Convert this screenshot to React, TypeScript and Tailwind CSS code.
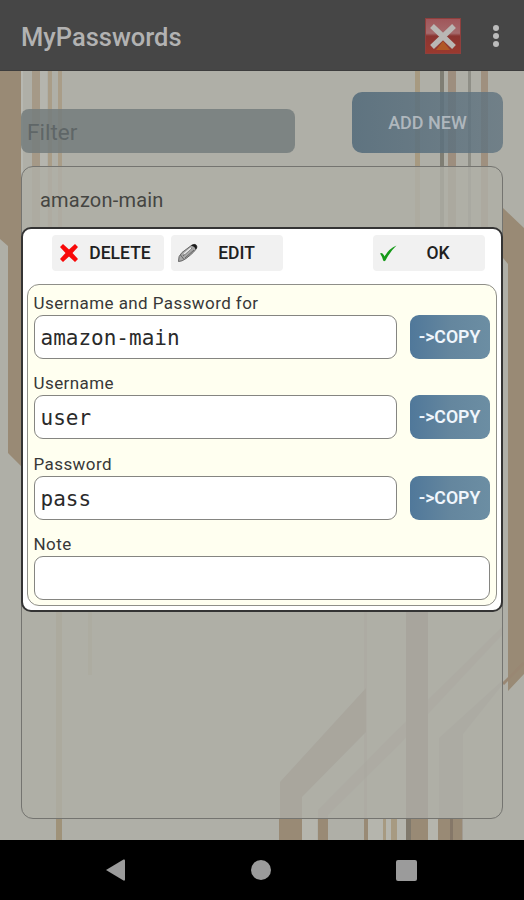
import type { ReactNode } from "react";

function Backdrop() {
  return (
    <svg className="absolute inset-0" width="524" height="769" viewBox="0 71 524 769" fill="#998a75">
      {/* left side */}
      <path d="M0 71H21V466L8 453V246L0 239Z" />
      <rect x="21" y="71" width="2" height="400" fill="#b7b8b1" />
      <rect x="32" y="71" width="8" height="400" fill="#a3937f" opacity=".8" />
      <rect x="40" y="71" width="7" height="400" fill="#b9b9b2" opacity=".6" />
      <rect x="48" y="71" width="4" height="400" fill="#a7967b" opacity=".7" />
      <rect x="58" y="71" width="4" height="400" fill="#a7967b" opacity=".7" />
      <rect x="56" y="560" width="6" height="280" fill="#9f9279" />
      <rect x="88" y="560" width="4" height="115" fill="#a09277" opacity=".6" />
      {/* upper right lines */}
      <rect x="415" y="71" width="5" height="400" fill="#a79a81" />
      <rect x="440" y="71" width="4" height="400" fill="#7f7e74" />
      <rect x="448" y="71" width="8" height="400" fill="#9d8e7e" />
      <rect x="468" y="71" width="3" height="400" fill="#8f8f87" />
      <rect x="481" y="71" width="7" height="400" fill="#9f907f" />
      <path d="M503 208L524 228V674L508 691V264L503 258Z" />
      <path d="M503 684L524 663" stroke="#998773" strokeWidth="3" />
      {/* lower right branches */}
      <g fill="#8d7c72">
        <path d="M280 840V782L366 688V732L302 797V840Z" />
        <path d="M318 840V810L390 737L503 626V634L400 744L328 815V840Z" opacity=".35" />
        <rect x="364" y="610" width="3" height="230" opacity=".35" />
        <rect x="406" y="600" width="22" height="220" fill="#8b7870" />
        <path d="M439 840V738L503 680V684L463 734V840Z" opacity=".4" />
      </g>
      <g>
        <rect x="279" y="818" width="23" height="22" />
        <rect x="302" y="818" width="15" height="22" fill="#b5b5ad" />
        <rect x="318" y="818" width="10" height="22" />
        <rect x="364" y="818" width="4" height="22" />
        <rect x="368" y="818" width="38" height="22" fill="#b5b5ad" />
        <rect x="383" y="818" width="3" height="22" fill="#a79a81" />
        <rect x="391" y="818" width="6" height="22" fill="#a79a81" />
        <rect x="406" y="818" width="22" height="22" />
        <rect x="406" y="818" width="5" height="22" fill="#80796c" />
        <rect x="428" y="818" width="10" height="22" fill="#b5b5ad" />
        <rect x="438" y="818" width="24" height="22" />
        <rect x="450" y="818" width="3" height="22" fill="#857768" />
      </g>
    </svg>
  );
}

function ToolButton({ icon, label, className = "" }: { icon: ReactNode; label: string; className?: string }) {
  return (
    <button className={`flex h-9 w-[112px] items-center rounded bg-[#f1f1f1] pl-[7px] text-[17.5px] font-medium text-[#202020] ${className}`}>
      {icon}
      <span className="flex-1 text-center">{label}</span>
    </button>
  );
}

function Field({ label, value, copy = true }: { label: string; value: string; copy?: boolean }) {
  return (
    <div className="h-[80.4px]">
      <div className="h-[26px] pt-[3px] text-[17px] leading-[23px] tracking-[0.42px] text-[#383838]">{label}</div>
      <div className="flex gap-[13px]">
        <div className="flex h-11 flex-1 items-center rounded-[9px] border-[1.5px] border-[#858581] bg-white px-[6px] pt-[3px] font-['DejaVu_Sans_Mono',monospace] text-[21px] text-[#2a2a2a]">
          {value}
        </div>
        {copy && (
          <button className="h-11 w-[80px] rounded-[9px] bg-linear-to-r from-[#50789a] via-[#64869e] to-[#6c8ea3] text-[17.7px] font-semibold text-[#f0f6fc]">
            {"->COPY"}
          </button>
        )}
      </div>
    </div>
  );
}

function CrossIcon() {
  return (
    <svg width="20" height="20" viewBox="0 0 20 20">
      <path d="M1 4L4 1L10 6.500L16 1L19 4L13.500 10L19 16L16 19L10 13.500L4 19L1 16L6.500 10Z" fill="#f80808" />
    </svg>
  );
}

function PencilIcon() {
  return (
    <svg width="20" height="20" viewBox="0 0 20 20">
      <path d="M.5 18.500Q0 13 4 9.500L14 2Q18.500 0 19 4Q18 8 8 15.500Q4 18.500 .5 18.500Z" fill="#a8a8a8" stroke="#666" strokeWidth="1" />
      <path d="M5 13L14 5M7 15L16 7M2.500 12L6 16.500" stroke="#666" strokeWidth="1" />
      <path d="M14 2Q18.500 0 19 4Q19 5.500 17.500 6.500Q17 3.500 13 2.800Z" fill="#1b1b1b" />
      <path d="M6 11L13 5" stroke="#eee" strokeWidth="1.400" />
    </svg>
  );
}

function CheckIcon() {
  return (
    <svg width="17" height="17" viewBox="0 0 17 17">
      <path d="M0 8.500Q2.500 6.500 4.500 11.500Q9 3.500 16.500 .5Q10 6.500 5.500 15.500Q3.500 17 3 15Q2 11 0 8.500Z" fill="#159a18" />
    </svg>
  );
}

function CloseAppIcon() {
  return (
    <svg width="36" height="36" viewBox="0 0 36 36">
      <defs>
        <linearGradient id="closeRed" x2="0" y2="1">
          <stop offset="0" stopColor="#a0565a" />
          <stop offset=".42" stopColor="#a56a6c" />
          <stop offset=".5" stopColor="#8a3431" />
          <stop offset="1" stopColor="#9a3a2e" />
        </linearGradient>
      </defs>
      <rect x=".5" y=".5" width="35" height="35" fill="url(#closeRed)" stroke="#8f3f3d" />
      <path d="M11 32L18 23L25 32Z" fill="#b05826" />
      <path d="M7 8L29 29M29 8L7 29" stroke="#b9b7b4" strokeWidth="5.500" />
    </svg>
  );
}

function AppBar() {
  return (
    <header className="flex h-[71px] items-center border-b border-[#3d3d3d] bg-[#464646] pl-[21px] pr-[25px] pt-[2px]">
      <h1 className="flex-1 pt-[2px] text-[25.5px] font-medium text-[#b2b2b2]">MyPasswords</h1>
      <CloseAppIcon />
      <div className="ml-[32px] flex flex-col gap-[2px]">
        <span className="size-[6px] rounded-full bg-[#bcbcbc]" />
        <span className="size-[6px] rounded-full bg-[#bcbcbc]" />
        <span className="size-[6px] rounded-full bg-[#bcbcbc]" />
      </div>
    </header>
  );
}

function EntryDialog() {
  return (
    <div className="absolute inset-x-0 top-[156px] flex justify-center">
      <div className="mr-px h-[385px] w-[482px] rounded-[10px] border-2 border-[#343434] bg-white px-1 pt-[6px]">
        <div className="flex pl-[25px] pr-[12px]">
          <ToolButton icon={<CrossIcon />} label="DELETE" className="pr-[2px]" />
          <ToolButton icon={<PencilIcon />} label="EDIT" className="ml-[7px] pr-[7px]" />
          <ToolButton icon={<CheckIcon />} label="OK" className="ml-auto pr-[5px]" />
        </div>
        <div className="mt-[13px] h-[322px] rounded-[12px] border-[1.5px] border-[#8f8f89] bg-[#fffff0] px-[6px] pt-[4px]">
          <Field label="Username and Password for" value="amazon-main" />
          <Field label="Username" value="user" />
          <Field label="Password" value="pass" />
          <Field label="Note" value="" copy={false} />
        </div>
      </div>
    </div>
  );
}

function NavBar() {
  return (
    <nav className="flex h-[60px] items-center justify-between bg-black pl-[106px] pr-[107px]">
      <svg width="20" height="22" viewBox="0 0 20 22" fill="#9b9b9b">
        <path d="M0 11L17.500 .5Q19 0 19 1.500V20.500Q19 22 17.500 21.500Z" />
      </svg>
      <span className="size-[20px] rounded-full bg-[#9b9b9b]" />
      <span className="size-[21px] rounded-[2px] bg-[#9b9b9b]" />
    </nav>
  );
}

export default function App() {
  return (
    <div className="flex h-[900px] w-[524px] flex-col overflow-hidden bg-[#afafa7] font-[Roboto,sans-serif]">
      <AppBar />
      <main className="relative flex-1">
        <Backdrop />
        <div className="relative flex h-full flex-col px-[21px] pb-[21px] pt-[21px]">
          <div className="flex items-end justify-between">
            <div className="flex h-[44px] w-[274px] items-center rounded-lg bg-[#747c7d]/85 px-[6px] pt-[3px] text-[22.5px] text-[#5f6667]">
              Filter
            </div>
            <button className="h-[61px] w-[151px] rounded-[10px] bg-linear-to-r from-[#566d7c]/90 to-[#617480]/80 text-[18px] font-medium text-[#afb7bd]">
              ADD NEW
            </button>
          </div>
          <div className="mt-[13px] flex-1 rounded-[12px] border-[1.5px] border-[#747470] bg-[#aeaea6]/83 pl-[18px] pt-[20px] text-[20px] leading-[26px] tracking-[0.2px] text-[#454542]">
            amazon-main
          </div>
        </div>
        <EntryDialog />
      </main>
      <NavBar />
    </div>
  );
}
